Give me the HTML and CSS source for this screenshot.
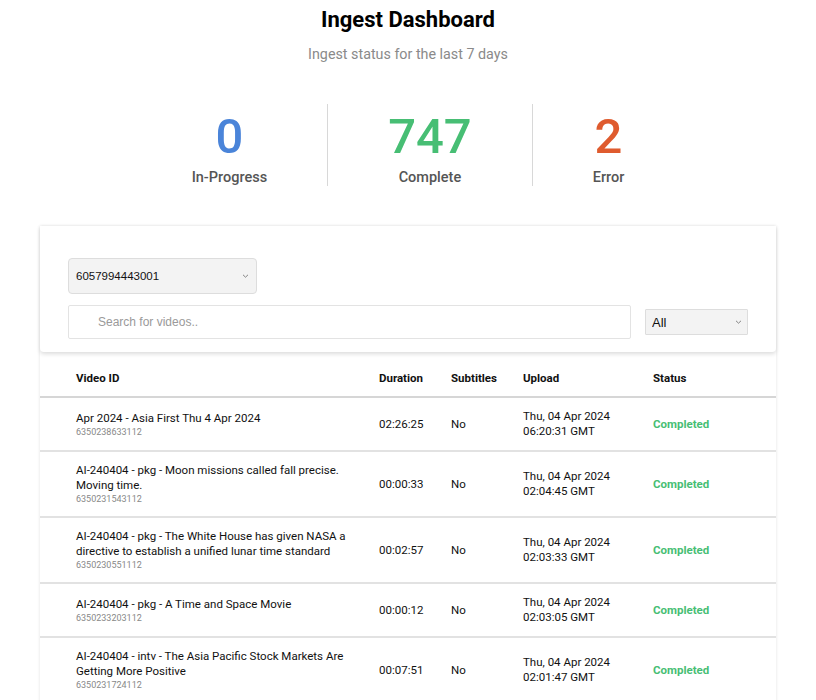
FILE: index.html
```html
<!DOCTYPE html>
<html lang="en">
<head>
<meta charset="utf-8">
<title>Ingest Dashboard</title>
<link rel="stylesheet" href="styles.css">
</head>
<body>
<header class="top">
  <h1 class="title">Ingest Dashboard</h1>
  <p class="subtitle">Ingest status for the last 7 days</p>
</header>

<section class="stats">
  <div class="stat">
    <div class="stat-num blue">0</div>
    <div class="stat-label">In-Progress</div>
  </div>
  <div class="stat">
    <div class="stat-num green">747</div>
    <div class="stat-label">Complete</div>
  </div>
  <div class="stat">
    <div class="stat-num red">2</div>
    <div class="stat-label">Error</div>
  </div>
</section>

<main class="card">
  <div class="filters">
    <div class="select-wrap account">
      <select class="select"><option>6057994443001</option></select>
      <svg class="chev" width="7" height="4" viewBox="0 0 7 4"><path d="M1 0.8l2.5 2.4 2.5-2.4" fill="none" stroke="#777" stroke-width="0.9"/></svg>
    </div>
    <div class="search-row">
      <input class="search" type="text" placeholder="Search for videos..">
      <div class="select-wrap status-filter">
        <select class="select small"><option>All</option></select>
        <svg class="chev" width="7" height="4" viewBox="0 0 7 4"><path d="M1 0.8l2.5 2.4 2.5-2.4" fill="none" stroke="#777" stroke-width="0.9"/></svg>
      </div>
    </div>
  </div>

  <table class="videos">
    <colgroup>
      <col class="c-id"><col class="c-dur"><col class="c-sub"><col class="c-up"><col class="c-st">
    </colgroup>
    <thead>
      <tr><th>Video ID</th><th>Duration</th><th>Subtitles</th><th>Upload</th><th>Status</th></tr>
    </thead>
    <tbody>
      <tr>
        <td><div class="vtitle">Apr 2024 - Asia First Thu 4 Apr 2024</div><div class="vid">6350238633112</div></td>
        <td>02:26:25</td><td>No</td><td>Thu, 04 Apr 2024<br>06:20:31 GMT</td><td class="done">Completed</td>
      </tr>
      <tr>
        <td><div class="vtitle">AI-240404 - pkg - Moon missions called fall precise. Moving time.</div><div class="vid">6350231543112</div></td>
        <td>00:00:33</td><td>No</td><td>Thu, 04 Apr 2024<br>02:04:45 GMT</td><td class="done">Completed</td>
      </tr>
      <tr>
        <td><div class="vtitle">AI-240404 - pkg - The White House has given NASA a directive to establish a unified lunar time standard</div><div class="vid">6350230551112</div></td>
        <td>00:02:57</td><td>No</td><td>Thu, 04 Apr 2024<br>02:03:33 GMT</td><td class="done">Completed</td>
      </tr>
      <tr>
        <td><div class="vtitle">AI-240404 - pkg - A Time and Space Movie</div><div class="vid">6350233203112</div></td>
        <td>00:00:12</td><td>No</td><td>Thu, 04 Apr 2024<br>02:03:05 GMT</td><td class="done">Completed</td>
      </tr>
      <tr>
        <td><div class="vtitle">AI-240404 - intv - The Asia Pacific Stock Markets Are Getting More Positive</div><div class="vid">6350231724112</div></td>
        <td>00:07:51</td><td>No</td><td>Thu, 04 Apr 2024<br>02:01:47 GMT</td><td class="done">Completed</td>
      </tr>
    </tbody>
  </table>
</main>
</body>
</html>
```

FILE: styles.css
```css
* { box-sizing: border-box; }

body {
  margin: 0;
  background: #fff;
  font-family: Roboto, "Liberation Sans", sans-serif;
  color: #111;
}

.top {
  text-align: center;
  padding-top: 6px;
}

.title {
  margin: 0;
  font-size: 22px;
  line-height: 28px;
  font-weight: 700;
  color: #000;
}

.subtitle {
  margin: 12px 0 0;
  font-size: 14.3px;
  line-height: 17px;
  color: #8a8a8a;
}

.stats {
  display: flex;
  justify-content: center;
  margin-top: 41px;
}

.stat {
  padding: 0 60px;
  height: 82px;
  display: flex;
  flex-direction: column;
  align-items: center;
}

.stat + .stat {
  border-left: 1px solid #d8d8d8;
}

.stat-num {
  font-size: 49px;
  line-height: 60px;
  font-weight: 500;
  margin-top: 3px;
}

.stat-label {
  font-size: 14.5px;
  line-height: 18px;
  font-weight: 500;
  color: #555;
  margin-top: 2px;
}

.blue { color: #4a84d9; }
.green { color: #47be74; }
.red { color: #df5b2e; }

.card {
  margin: 40px 40px 0;
  background: #fff;
  box-shadow: 0 0 3px rgba(0, 0, 0, 0.12);
}

.filters {
  padding: 32px 28px 13px;
  box-shadow: 0 2px 4px rgba(0, 0, 0, 0.14);
  border-radius: 0 0 4px 4px;
  position: relative;
}

.select-wrap {
  position: relative;
  display: inline-block;
}

.select {
  appearance: none;
  -webkit-appearance: none;
  font-family: "Liberation Sans", Arial, sans-serif;
  color: #111;
  background: #f3f3f3;
  border: 1px solid #ddd;
  outline: none;
  margin: 0;
}

.account .select {
  width: 189px;
  height: 36px;
  border-radius: 4px;
  font-size: 11.5px;
  padding: 0 20px 0 7px;
}

.chev {
  position: absolute;
  right: 8px;
  top: 50%;
  margin-top: -2px;
  pointer-events: none;
}

.search-row {
  display: flex;
  align-items: center;
  margin-top: 11px;
}

.search {
  flex: 0 0 563px;
  height: 34px;
  border: 1px solid #e3e3e3;
  border-radius: 2px;
  padding: 0 0 0 29px;
  font-family: "Liberation Sans", Arial, sans-serif;
  font-size: 12px;
  color: #111;
  outline: none;
}

.search::placeholder { color: #9a9a9a; }

.status-filter {
  margin-left: 14px;
}

.status-filter .select {
  width: 103px;
  height: 26px;
  border-radius: 1px;
  font-size: 13px;
  padding: 0 20px 0 6px;
}

.status-filter .chev { right: 6px; }

.videos {
  width: 100%;
  border-collapse: collapse;
  table-layout: fixed;
  font-size: 11.5px;
  line-height: 15px;
}

.c-id { width: 339px; }
.c-dur { width: 72px; }
.c-sub { width: 72px; }
.c-up { width: 130px; }
.c-st { width: auto; }

.videos th {
  text-align: left;
  font-weight: 700;
  height: 45px;
  padding: 8px 0 0;
  border-bottom: 2px solid #d6d6d6;
  color: #111;
}

.videos td {
  padding: 11px 0;
  vertical-align: middle;
  border-bottom: 2px solid #e2e2e2;
  color: #111;
}

.videos th:first-child,
.videos td:first-child {
  padding-left: 36px;
  padding-right: 18px;
}

.vtitle {
  line-height: 15px;
}

.vid {
  font-size: 9px;
  line-height: 12px;
  color: #888;
}

.videos .done {
  color: #47be74;
  font-weight: 700;
}
```
